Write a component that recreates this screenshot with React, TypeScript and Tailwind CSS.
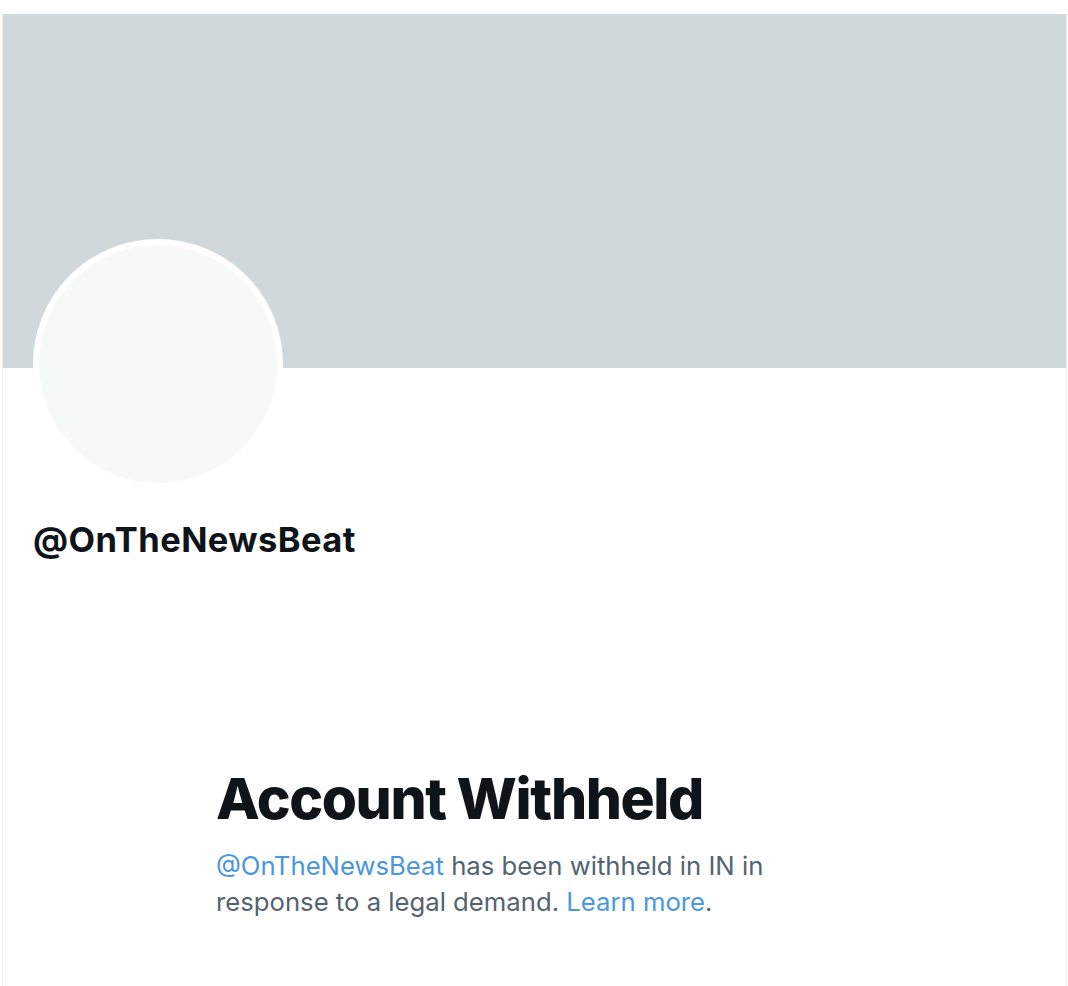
export default function App() {
  return (
    <div className="w-[1068px] h-[986px] bg-white pt-[14px] overflow-hidden" style={{ fontFamily: "Inter, 'Liberation Sans', sans-serif" }}>
      <div className="ml-[2px] w-[1065px] h-[972px] border-x border-[#eaeef0]">
        <div className="h-[354px] bg-[#d0d8dc]" />
        <div className="ml-[30px] -mt-[129px] w-[250px] h-[250px] rounded-full border-[6px] border-white bg-[#f7f9f9]" />
        <h1 className="mt-[30px] ml-[30px] text-[34.5px] leading-[42px] font-bold text-[#0f1419] tracking-[0.4px]">
          @OnTheNewsBeat
        </h1>
        <div className="mt-[205px] ml-[213px] w-[580px]">
          <h2 className="text-[57px] leading-[66px] font-extrabold text-[#0f1419] tracking-[-1.4px]">
            Account Withheld
          </h2>
          <p className="mt-[16px] text-[25.7px] leading-[36px] text-[#536471]">
            <span className="text-[#4a97df]">@OnTheNewsBeat</span> has been withheld in IN in response to a legal demand.{" "}
            <span className="text-[#4a97df]">Learn more</span>.
          </p>
        </div>
      </div>
    </div>
  )
}
